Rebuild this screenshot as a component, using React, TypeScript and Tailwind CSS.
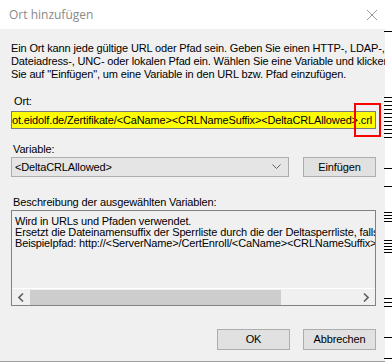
import React from "react";

const dash = (top: number, w = 8) => (
  <div key={top} className="absolute right-0 h-[1px] bg-black" style={{ top, width: w }} />
);

export default function App() {
  const dashes = [31, 97, 101, 105, 109, 113, 117, 121, 125, 129, 133, 137, 168, 186, 212, 215, 218, 221, 240, 243, 246, 249, 252, 298, 302, 306, 337, 358];
  return (
    <div
      className="relative w-[392px] h-[363px] bg-white overflow-hidden text-black"
      style={{ fontFamily: '"Liberation Sans", Arial, sans-serif' }}
    >
      <div className="w-[385px] h-[362px] flex flex-col border-b border-[#a0a0a0]">
        {/* title bar */}
        <div className="h-[29px] bg-white flex items-center justify-between pl-[9px] pr-[6px] shrink-0">
          <span
            className="text-[12px] text-[#8a8a8a]"
            style={{ fontFamily: '"Open Sans", "Noto Sans", sans-serif' }}
          >
            Ort hinzufügen
          </span>
          <svg width="12" height="12" viewBox="0 0 12 12" className="mr-[1px]">
            <path d="M1 1 L11 11 M11 1 L1 11" stroke="#9a9a9a" strokeWidth="1" />
          </svg>
        </div>
        {/* body */}
        <div className="flex-1 bg-[#f0f0f0] flex flex-col pl-[11px] pr-[9px] pt-[13px] text-[11px] tracking-[-0.14px]">
          <div className="leading-[13px] whitespace-nowrap overflow-hidden mr-[-9px]">
            <div>Ein Ort kann jede gültige URL oder Pfad sein. Geben Sie einen HTTP-, LDAP-,</div>
            <div>Dateiadress-, UNC- oder lokalen Pfad ein. Wählen Sie eine Variable und klicken</div>
            <div>Sie auf "Einfügen", um eine Variable in den URL bzw. Pfad einzufügen.</div>
          </div>
          <div className="mt-[14px] pl-[3px] leading-[13px]">Ort:</div>
          <div className="mt-[3px] h-[18px] bg-[#ffff00] border border-[#7a7a7a] flex items-center justify-end overflow-hidden whitespace-nowrap pr-[3px]">
            <span className="leading-[13px]">
              {"http://root.eidolf.de/Zertifikate/<CaName><CRLNameSuffix><DeltaCRLAllowed>.crl"}
            </span>
          </div>
          <div className="mt-[14px] pl-[2px] leading-[13px]">Variable:</div>
          <div className="mt-[1px] flex items-center gap-[14px] h-[20px]">
            <div className="w-[278px] h-[20px] bg-[#e5e5e5] border border-[#adadad] flex items-center justify-between pl-[3px] pr-[7px]">
              <span>{"<DeltaCRLAllowed>"}</span>
              <svg width="9" height="6" viewBox="0 0 9 6">
                <path d="M0.5 0.5 L4.5 4.5 L8.5 0.5" stroke="#606060" fill="none" strokeWidth="1" />
              </svg>
            </div>
            <div className="w-[73px] h-[20px] bg-[#e1e1e1] border border-[#adadad] flex items-center justify-center">
              Einfügen
            </div>
          </div>
          <div className="mt-[19px] pl-[2px] leading-[13px] whitespace-nowrap">Beschreibung der ausgewählten Variablen:</div>
          <div className="mt-[1px] h-[96px] border border-[#828282] flex flex-col overflow-hidden">
            <div className="flex-1 pl-[3px] pt-[5px] leading-[11px] whitespace-nowrap overflow-hidden">
              <div>Wird in URLs und Pfaden verwendet.</div>
              <div>Ersetzt die Dateinamensuffix der Sperrliste durch die der Deltasperrliste, falls erlaubt.</div>
              <div>{"Beispielpfad: http://<ServerName>/CertEnroll/<CaName><CRLNameSuffix><DeltaCRLAllowed>.crl"}</div>
            </div>
            <div className="h-[17px] border-t border-white flex items-center shrink-0">
              <div className="w-[18px] flex justify-center">
                <svg width="6" height="9" viewBox="0 0 6 9">
                  <path d="M5 0.5 L1 4.5 L5 8.5" stroke="#606060" fill="none" strokeWidth="1.6" />
                </svg>
              </div>
              <div className="w-[251px] h-[15px] bg-[#cdcdcd]" />
              <div className="flex-1" />
              <div className="w-[18px] flex justify-center">
                <svg width="6" height="9" viewBox="0 0 6 9">
                  <path d="M1 0.5 L5 4.5 L1 8.5" stroke="#606060" fill="none" strokeWidth="1.6" />
                </svg>
              </div>
            </div>
          </div>
          <div className="mt-[23px] flex justify-end gap-[13px]">
            <div className="w-[73px] h-[21px] bg-[#e1e1e1] border border-[#adadad] flex items-center justify-center">
              OK
            </div>
            <div className="w-[73px] h-[21px] bg-[#e1e1e1] border border-[#adadad] flex items-center justify-center">
              Abbrechen
            </div>
          </div>
        </div>
      </div>
      {/* red highlight */}
      <div className="absolute left-[354px] top-[103px] w-[27px] h-[34px] border-2 border-[#ff0000]" />
      {dashes.map((t) => dash(t))}
    </div>
  );
}
